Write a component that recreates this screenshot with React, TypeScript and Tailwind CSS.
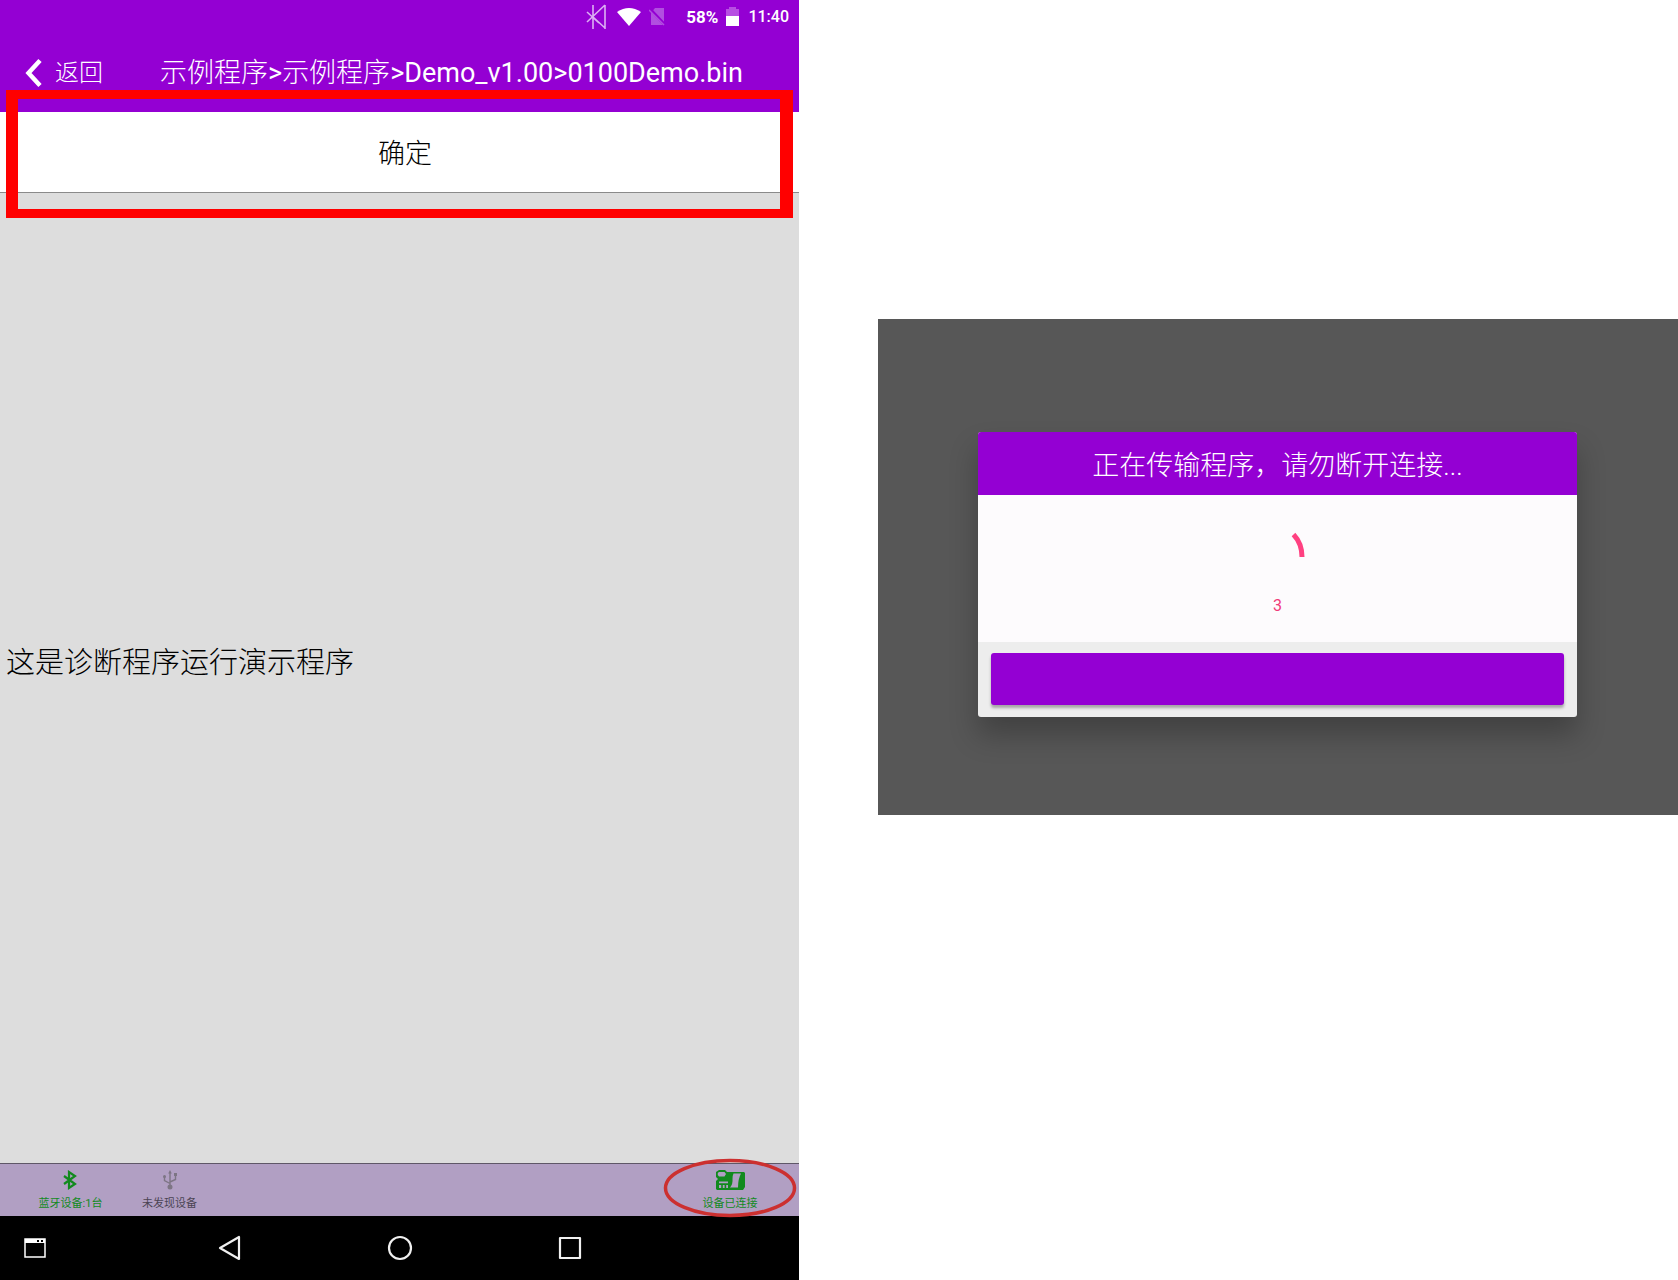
import React from "react";

function StatusBar() {
  return (
    <div className="flex h-[34px] items-center justify-end pr-[10px] text-white">
      <svg className="mr-[11px] h-[26px] w-5" viewBox="0 0 20 26" fill="none" stroke="#dcb0f3" strokeWidth="1.6" aria-hidden="true">
        <path d="M7 1V25M19 1V25M1 8L13 19M1 18L19 1M7 13L19 24" />
      </svg>
      <svg className="mr-2 h-[18px] w-6" viewBox="0 0 24 18" fill="#fff" aria-hidden="true">
        <path d="M0 4Q12 -4 24 4L12 18Z" />
      </svg>
      <svg className="mr-[20px] h-[18px] w-[17px]" viewBox="0 0 17 18" aria-hidden="true">
        <path d="M2 5L6 0H15V17H2Z" fill="#b14fe0" />
        <path d="M1 1L16 17" stroke="#9400d3" strokeWidth="3" />
        <path d="M0 2L15 17" stroke="#b14fe0" strokeWidth="1.5" />
      </svg>
      <span className="mr-2 text-[17px] leading-8 font-bold">58%</span>
      <svg className="mr-[9px] h-[19px] w-[13px] -translate-y-px" viewBox="0 0 13 19" aria-hidden="true">
        <path d="M3 0H10V2H13V9H0V2H3Z" fill="#b74fe2" />
        <path d="M0 9H13V19H0Z" fill="#fff" />
      </svg>
      <span className="text-[16px] leading-8 font-medium">11:40</span>
    </div>
  );
}

function Header() {
  return (
    <header className="bg-[#9400d3] text-white">
      <StatusBar />
      <div className="flex h-[78px] items-center">
        <button className="flex items-center pl-[25px] text-[24px] leading-8 font-light">
          <svg className="mr-[13px] h-[30px] w-[17px]" viewBox="0 0 17 30" fill="none" stroke="#fff" strokeWidth="4.5" aria-hidden="true">
            <path d="M15 2.500L3.500 15L15 27.500" />
          </svg>
          返回
        </button>
        <h1 className="ml-[57px] text-[27px] leading-8 font-light whitespace-nowrap">
          示例程序<span className="font-normal">&gt;</span>示例程序<span className="font-normal">&gt;Demo_v1.00&gt;0100Demo.bin</span>
        </h1>
      </div>
    </header>
  );
}

function ConnectionBar() {
  return (
    <footer className="flex h-[53px] border-t border-[#5f5768] bg-[#b19fc3] pl-[21px] text-[11px] leading-4">
      <div className="flex w-[99px] flex-col items-center pt-[6px] text-[#128a1e]">
        <svg className="mb-[6px] h-5 w-[16px]" viewBox="0 0 16 20" fill="none" stroke="currentColor" strokeWidth="2.2" aria-hidden="true">
          <path d="M1 6L12 14L6 18V2L12 6L1 14" />
        </svg>
        蓝牙设备:1台
      </div>
      <div className="flex w-[99px] flex-col items-center pt-[6px] text-[#4b4453]">
        <svg className="mb-[6px] h-5 w-[14px]" viewBox="0 0 14 20" fill="none" stroke="#7d7584" strokeWidth="1.4" aria-hidden="true">
          <path d="M7 17V2M1.500 7V10.500L7 13.500M12.500 5V9.500L7 12" />
          <circle cx="7" cy="17" r="1.800" fill="#7d7584" />
          <circle cx="1.500" cy="6.500" r="1.500" fill="#7d7584" stroke="none" />
          <path d="M5.200 3.500L7 0L8.800 3.500ZM11 3H14V6H11Z" fill="#7d7584" stroke="none" />
        </svg>
        未发现设备
      </div>
      <div className="relative mr-[2px] ml-auto flex w-[134px] flex-col items-center pt-[6px] text-[#128a1e]">
        <svg className="mb-[6px] h-5 w-[29px]" viewBox="0 0 29 20" aria-hidden="true">
          <path d="M3 0H9L11 2H28L29 3V17L27 20H1L0 19V11L2 9L0 7V2Z" fill="currentColor" />
          <path d="M3 2H8.500L10 4L8.500 6.500H3L1.800 5V3ZM17.500 3.500H25Q22 9 22 17.500H14Q17 14 16.500 9Q16.300 6 17.500 3.500ZM3 11.500H12V13.200H3ZM3 15H5.200V18H3ZM6.800 15H8.600V18H6.800ZM10.200 15H12V18H10.200Z" fill="#b19fc3" />
        </svg>
        设备已连接
        <svg className="absolute -top-[6px] left-0 h-[60px] w-[134px]" viewBox="0 0 134 60" fill="none" stroke="#cc3030" strokeWidth="3.500" aria-hidden="true">
          <ellipse cx="67" cy="30" rx="64.500" ry="27.500" />
        </svg>
      </div>
    </footer>
  );
}

function NavigationBar() {
  return (
    <nav className="flex h-16 bg-black" aria-label="系统导航">
      <div className="flex flex-1 items-center">
        <button aria-label="窗口" className="ml-6">
          <svg className="h-5 w-[22px]" viewBox="0 0 22 20" aria-hidden="true">
            <path d="M1 1H21V19H1Z" fill="none" stroke="#fff" strokeWidth="1.500" />
            <path d="M1 1H21V5H1Z" fill="#fff" />
            <path d="M13 2H15V4H13ZM17 2H19V4H17Z" fill="#000" />
          </svg>
        </button>
      </div>
      <button aria-label="后退" className="flex w-[170px] items-center justify-center">
        <svg className="h-[26px] w-6" viewBox="0 0 24 26" fill="none" stroke="#f0f0f0" strokeWidth="2.200" strokeLinejoin="round" aria-hidden="true">
          <path d="M21 2V24L2 13Z" />
        </svg>
      </button>
      <button aria-label="主页" className="flex w-[170px] items-center justify-center">
        <svg className="h-[26px] w-[26px]" viewBox="0 0 26 26" fill="none" stroke="#f0f0f0" strokeWidth="2.200" aria-hidden="true">
          <circle cx="13" cy="13" r="11" />
        </svg>
      </button>
      <button aria-label="最近任务" className="flex w-[170px] items-center justify-center">
        <svg className="h-6 w-6" viewBox="0 0 24 24" fill="none" stroke="#f0f0f0" strokeWidth="2.200" strokeLinejoin="round" aria-hidden="true">
          <path d="M2 2H22V22H2Z" />
        </svg>
      </button>
      <div className="flex-1" />
    </nav>
  );
}

function Phone() {
  return (
    <section className="flex min-h-screen flex-col bg-[#dddddd]">
      <Header />
      <div className="relative">
        <button className="block h-[81px] w-full border-b border-[#8a8a8a] bg-white pt-1 pl-[11px] text-[27px] leading-8 font-light text-black">
          确定
        </button>
        <div className="pointer-events-none absolute inset-x-[6px] -top-[22px] -bottom-[25px] border-y-[9px] border-r-[13px] border-l-[12px] border-[#ff0000]" />
      </div>
      <main className="flex flex-1 items-center pb-[30px] pl-[6px]">
        <p className="text-[29px] leading-10 font-light text-black">这是诊断程序运行演示程序</p>
      </main>
      <ConnectionBar />
      <NavigationBar />
    </section>
  );
}

function TransferDialog() {
  return (
    <section className="mt-[319px] self-start bg-[#575757] pt-[113px] pr-[101px] pb-[98px] pl-[100px]">
      <div role="dialog" aria-labelledby="transfer-title" className="overflow-hidden rounded-[3px] bg-[#ededed] shadow-[0_18px_28px_rgba(0,0,0,0.25)]">
        <h2 id="transfer-title" className="bg-[#9400d3] pt-[18px] pb-3 text-center text-[27px] leading-[33px] font-light text-white">
          正在传输程序，请勿断开连接...
        </h2>
        <div className="flex flex-col items-center bg-[#fdfbfd] pt-8 pb-6">
          <svg className="h-[67px] w-14" viewBox="0 0 56 67" fill="none" stroke="#ff4081" strokeWidth="5" aria-hidden="true">
            <path d="M43.500 7.500A25 30 0 0 1 52 30" />
          </svg>
          <span className="text-[16px] leading-6 text-[#f03a78]">3</span>
        </div>
        <div className="px-[13px] pt-[11px] pb-3">
          <button aria-label="取消" className="block h-[52px] w-full rounded-[3px] bg-[#9400d3] shadow-[0_3px_3px_rgba(0,0,0,0.3)]" />
        </div>
      </div>
    </section>
  );
}

export default function App() {
  return (
    <div className="grid min-h-screen grid-cols-[799fr_800fr] gap-x-[79px] bg-white font-['Roboto','Noto_Sans_CJK_SC',sans-serif]" lang="zh-CN">
      <Phone />
      <TransferDialog />
    </div>
  );
}
